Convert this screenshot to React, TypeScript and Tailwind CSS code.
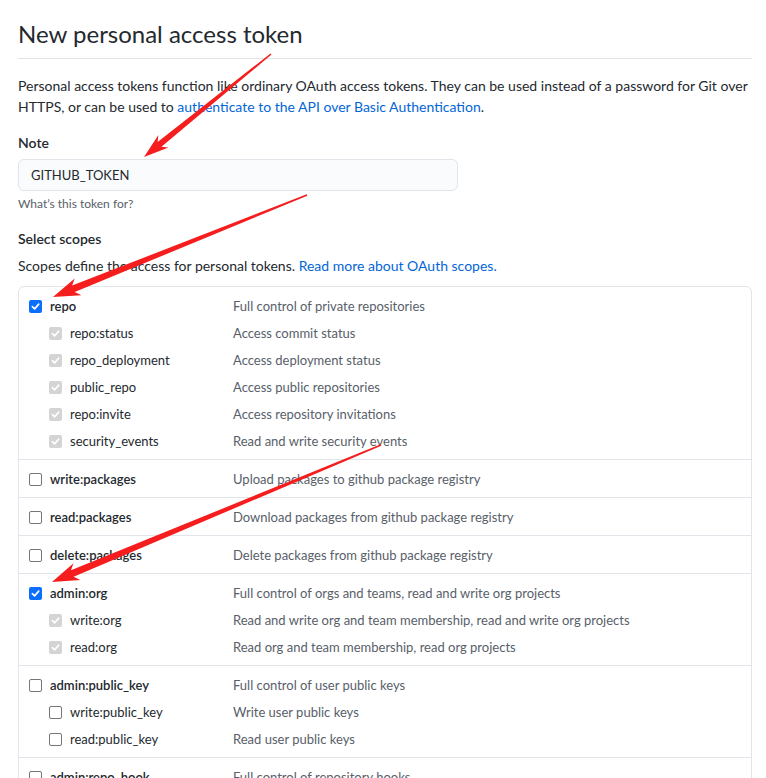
import React from "react";

type Scope = { name: string; desc: string; checked?: boolean; subs?: { name: string; desc: string; disabled?: boolean }[] };

const scopes: Scope[] = [
  {
    name: "repo",
    desc: "Full control of private repositories",
    checked: true,
    subs: [
      { name: "repo:status", desc: "Access commit status", disabled: true },
      { name: "repo_deployment", desc: "Access deployment status", disabled: true },
      { name: "public_repo", desc: "Access public repositories", disabled: true },
      { name: "repo:invite", desc: "Access repository invitations", disabled: true },
      { name: "security_events", desc: "Read and write security events", disabled: true },
    ],
  },
  { name: "write:packages", desc: "Upload packages to github package registry" },
  { name: "read:packages", desc: "Download packages from github package registry" },
  { name: "delete:packages", desc: "Delete packages from github package registry" },
  {
    name: "admin:org",
    desc: "Full control of orgs and teams, read and write org projects",
    checked: true,
    subs: [
      { name: "write:org", desc: "Read and write org and team membership, read and write org projects", disabled: true },
      { name: "read:org", desc: "Read org and team membership, read org projects", disabled: true },
    ],
  },
  {
    name: "admin:public_key",
    desc: "Full control of user public keys",
    subs: [
      { name: "write:public_key", desc: "Write user public keys" },
      { name: "read:public_key", desc: "Read user public keys" },
    ],
  },
  { name: "admin:repo_hook", desc: "Full control of repository hooks" },
];

function Check({ state }: { state: "on" | "off" | "disabled" }) {
  if (state === "off") {
    return <span className="block w-[13px] h-[13px] rounded-[2px] border border-[#767676] bg-white shrink-0" />;
  }
  const bg = state === "on" ? "bg-[#0b6ffd]" : "bg-[#d4d4d4]";
  return (
    <span className={`flex items-center justify-center w-[13px] h-[13px] rounded-[2px] shrink-0 ${bg}`}>
      <svg width="9" height="9" viewBox="0 0 10 10" fill="none">
        <path d="M1.5 5.2 L4 7.6 L8.6 2.4" stroke="white" strokeWidth="1.8" strokeLinecap="round" strokeLinejoin="round" />
      </svg>
    </span>
  );
}

function Arrow({ t, p, L, W, w0, w1 }: { t: [number, number]; p: [number, number]; L: number; W: number; w0: number; w1: number }) {
  const dx = p[0] - t[0];
  const dy = p[1] - t[1];
  const len = Math.hypot(dx, dy);
  const ux = dx / len;
  const uy = dy / len;
  const nx = -uy;
  const ny = ux;
  const bx = p[0] - ux * L;
  const by = p[1] - uy * L;
  const wx = p[0] - ux * (L + 5);
  const wy = p[1] - uy * (L + 5);
  const pts: [number, number][] = [
    [t[0] + (nx * w0) / 2, t[1] + (ny * w0) / 2],
    [bx + (nx * w1) / 2, by + (ny * w1) / 2],
    [wx + nx * W, wy + ny * W],
    [p[0], p[1]],
    [wx - nx * W, wy - ny * W],
    [bx - (nx * w1) / 2, by - (ny * w1) / 2],
    [t[0] - (nx * w0) / 2, t[1] - (ny * w0) / 2],
  ];
  return <polygon points={pts.map((q) => q.join(",")).join(" ")} fill="#f51d1d" />;
}

export default function App() {
  return (
    <div
      className="relative w-[766px] h-[778px] overflow-hidden bg-white text-[#24292e] text-[14px] leading-[21px]"
      style={{ fontFamily: "Lato, 'Liberation Sans', sans-serif" }}
    >
      <div className="pl-[18px] pr-[14px]">
        <h1 className="pt-[16px] pb-[6px] text-[24px] leading-[36px] font-normal border-b border-[#e1e4e8]">
          New personal access token
        </h1>
        <p className="mt-[16px] text-[#24292e]">
          Personal access tokens function like ordinary OAuth access tokens. They can be used instead of a password for Git over
          HTTPS, or can be used to <span className="text-[#0366d6]">authenticate to the API over Basic Authentication</span>.
        </p>
        <div className="mt-[15px] font-semibold">Note</div>
        <div className="mt-[6px] w-[440px] h-[32px] rounded-[6px] border border-[#e1e4e8] bg-[#fafbfc] flex items-center pl-[12px] text-[13px]">
          GITHUB_TOKEN
        </div>
        <div className="mt-[4px] text-[12px] leading-[18px] text-[#586069]">What’s this token for?</div>
        <div className="mt-[15px] font-semibold">Select scopes</div>
        <div className="mt-[6px]">
          Scopes define the access for personal tokens. <span className="text-[#0366d6]">Read more about OAuth scopes.</span>
        </div>
        <div className="mt-[10px] border border-[#e1e4e8] rounded-[6px] text-[13px]">
          {scopes.map((s, i) => (
            <div key={s.name} className={`pt-[6px] pb-[4px] ${i > 0 ? "border-t border-[#e1e4e8]" : ""}`}>
              <div className="grid grid-cols-[204px_1fr] h-[27px] items-center pl-[10px]">
                <div className="flex items-center gap-[8px]">
                  <Check state={s.checked ? "on" : "off"} />
                  <span className="font-semibold">{s.name}</span>
                </div>
                <div className="text-[#586069]">{s.desc}</div>
              </div>
              {s.subs?.map((u) => (
                <div key={u.name} className="grid grid-cols-[204px_1fr] h-[27px] items-center pl-[10px]">
                  <div className="flex items-center gap-[8px] pl-[20px]">
                    <Check state={u.disabled ? "disabled" : "off"} />
                    <span>{u.name}</span>
                  </div>
                  <div className="text-[#586069]">{u.desc}</div>
                </div>
              ))}
            </div>
          ))}
        </div>
      </div>
      <svg className="absolute inset-0 pointer-events-none" width="766" height="778">
        <Arrow t={[271, 54]} p={[144, 157]} L={20} W={8} w0={1.5} w1={6} />
        <Arrow t={[307, 195]} p={[53, 297]} L={22} W={9} w0={1.5} w1={7} />
        <Arrow t={[381, 445]} p={[52, 582]} L={22} W={9} w0={1.5} w1={7} />
      </svg>
    </div>
  );
}
